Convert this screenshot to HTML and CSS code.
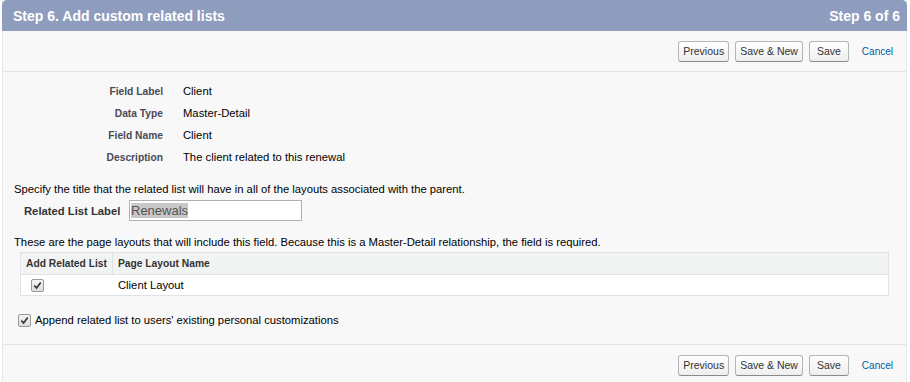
FILE: index.html
```html
<!DOCTYPE html>
<html>
<head>
<meta charset="utf-8">
<link rel="stylesheet" href="styles.css">
</head>
<body>
<div class="page">
  <div class="header">
    <span class="title">Step 6. Add custom related lists</span>
    <span class="step">Step 6 of 6</span>
  </div>
  <div class="btnbar top">
    <span class="btn">Previous</span>
    <span class="btn">Save &amp; New</span>
    <span class="btn wide">Save</span>
    <span class="cancel">Cancel</span>
  </div>
  <div class="body">
    <div class="fields">
      <div class="lbl">Field Label</div><div class="val">Client</div>
      <div class="lbl">Data Type</div><div class="val">Master-Detail</div>
      <div class="lbl">Field Name</div><div class="val">Client</div>
      <div class="lbl">Description</div><div class="val">The client related to this renewal</div>
    </div>
    <p class="note first">Specify the title that the related list will have in all of the layouts associated with the parent.</p>
    <div class="labelrow">
      <span class="lbl2">Related List Label</span>
      <div class="textbox"><span class="sel">Renewals</span></div>
    </div>
    <p class="note second">These are the page layouts that will include this field. Because this is a Master-Detail relationship, the field is required.</p>
    <div class="table">
      <div class="thead">
        <div class="c1">Add Related List</div>
        <div class="c2">Page Layout Name</div>
      </div>
      <div class="trow">
        <div class="c1"><span class="cb"><svg viewBox="0 0 10 10" width="9" height="9"><path d="M1.5 5.2 L4 7.8 L8.6 1.6" fill="none" stroke="#333" stroke-width="1.8"/></svg></span></div>
        <div class="c2">Client Layout</div>
      </div>
    </div>
    <div class="append">
      <span class="cb"><svg viewBox="0 0 10 10" width="9" height="9"><path d="M1.5 5.2 L4 7.8 L8.6 1.6" fill="none" stroke="#333" stroke-width="1.8"/></svg></span>
      <span>Append related list to users' existing personal customizations</span>
    </div>
  </div>
  <div class="btnbar bottom">
    <span class="btn">Previous</span>
    <span class="btn">Save &amp; New</span>
    <span class="btn wide">Save</span>
    <span class="cancel">Cancel</span>
  </div>
</div>
</body>
</html>
```
FILE: styles.css
```css
html, body {
  margin: 0;
  padding: 0;
  background: #ffffff;
}
body {
  font-family: "Liberation Sans", Arial, sans-serif;
  font-size: 11.25px;
  color: #000;
}
.page {
  width: 905px;
  margin-left: 2px;
  background: #f8f8f8;
  border-left: 1px solid #e6e8ea;
  border-right: 1px solid #e6e8ea;
  box-sizing: border-box;
}
.header {
  height: 31px;
  background: #8e9dbe;
  border-radius: 5px 5px 0 0;
  margin: 0 -1px;
  display: flex;
  align-items: center;
  justify-content: space-between;
  padding: 0 7px 0 11px;
  color: #fff;
  font-weight: bold;
  font-size: 14px;
}
.btnbar {
  height: 40px;
  display: flex;
  align-items: center;
  justify-content: flex-end;
  padding-right: 13px;
}
.btnbar.top {
  border-bottom: 1px solid #e3e3e3;
}
.btnbar.bottom {
  border-top: 1px solid #e3e3e3;
  height: 40px;
}
.btn {
  display: inline-flex;
  align-items: center;
  height: 19px;
  padding: 0 4px;
  margin-left: 6px;
  border: 1px solid #b5b5b5;
  border-bottom-color: #8a8a8a;
  border-radius: 3px;
  background: linear-gradient(#ffffff, #eeeeee);
  color: #333;
  font-size: 10.5px;
}
.btn.wide {
  padding: 0 7px;
}
.cancel {
  color: #015ba7;
  font-size: 10px;
  margin-left: 13px;
}
.body {
  padding: 8px 0 0 0;
}
.fields {
  display: grid;
  grid-template-columns: 160px auto;
  column-gap: 20px;
  grid-auto-rows: 22px;
  align-items: center;
}
.lbl {
  text-align: right;
  font-size: 10.25px;
  font-weight: bold;
  color: #4a4a56;
}
.note {
  margin: 0;
  padding-left: 11px;
  line-height: 16px;
}
.note.first {
  margin-top: 13px;
}
.labelrow {
  display: flex;
  align-items: center;
  height: 21px;
  margin-top: 3px;
  padding-left: 21px;
}
.lbl2 {
  font-weight: bold;
  color: #333;
  width: 105px;
}
.textbox {
  width: 170px;
  height: 19px;
  border: 1px solid #b0b0b0;
  background: #fff;
  display: flex;
  align-items: center;
  padding-left: 1px;
  font-size: 13px;
  color: #555;
}
.sel {
  background: #c8c8c8;
  line-height: 15px;
}
.note.second {
  margin-top: 13px;
}
.table {
  margin: 2px 0 0 17px;
  width: 869px;
  border: 1px solid #e0e3e5;
  box-sizing: border-box;
}
.thead, .trow {
  display: flex;
  align-items: center;
}
.thead {
  height: 21px;
  background: #f2f3f3;
  border-bottom: 1px solid #e0e3e5;
  font-size: 10.25px;
  font-weight: bold;
  color: #333;
}
.trow {
  height: 20px;
  background: #fff;
}
.c1 {
  width: 92px;
  padding-left: 5px;
  box-sizing: border-box;
  height: 100%;
  display: flex;
  align-items: center;
}
.thead .c1 {
  border-right: 1px solid #e0e3e5;
}
.c2 {
  padding-left: 5px;
}
.trow .c1 {
  padding-left: 10px;
}
.cb {
  display: inline-flex;
  align-items: center;
  justify-content: center;
  width: 11px;
  height: 11px;
  border: 1px solid #9a9a9a;
  border-radius: 2px;
  background: linear-gradient(#f4f4f4, #dcdcdc);
}
.append {
  display: flex;
  align-items: center;
  gap: 4px;
  padding-left: 15px;
  margin-top: 16px;
  height: 16px;
  padding-bottom: 16px;
}
```
